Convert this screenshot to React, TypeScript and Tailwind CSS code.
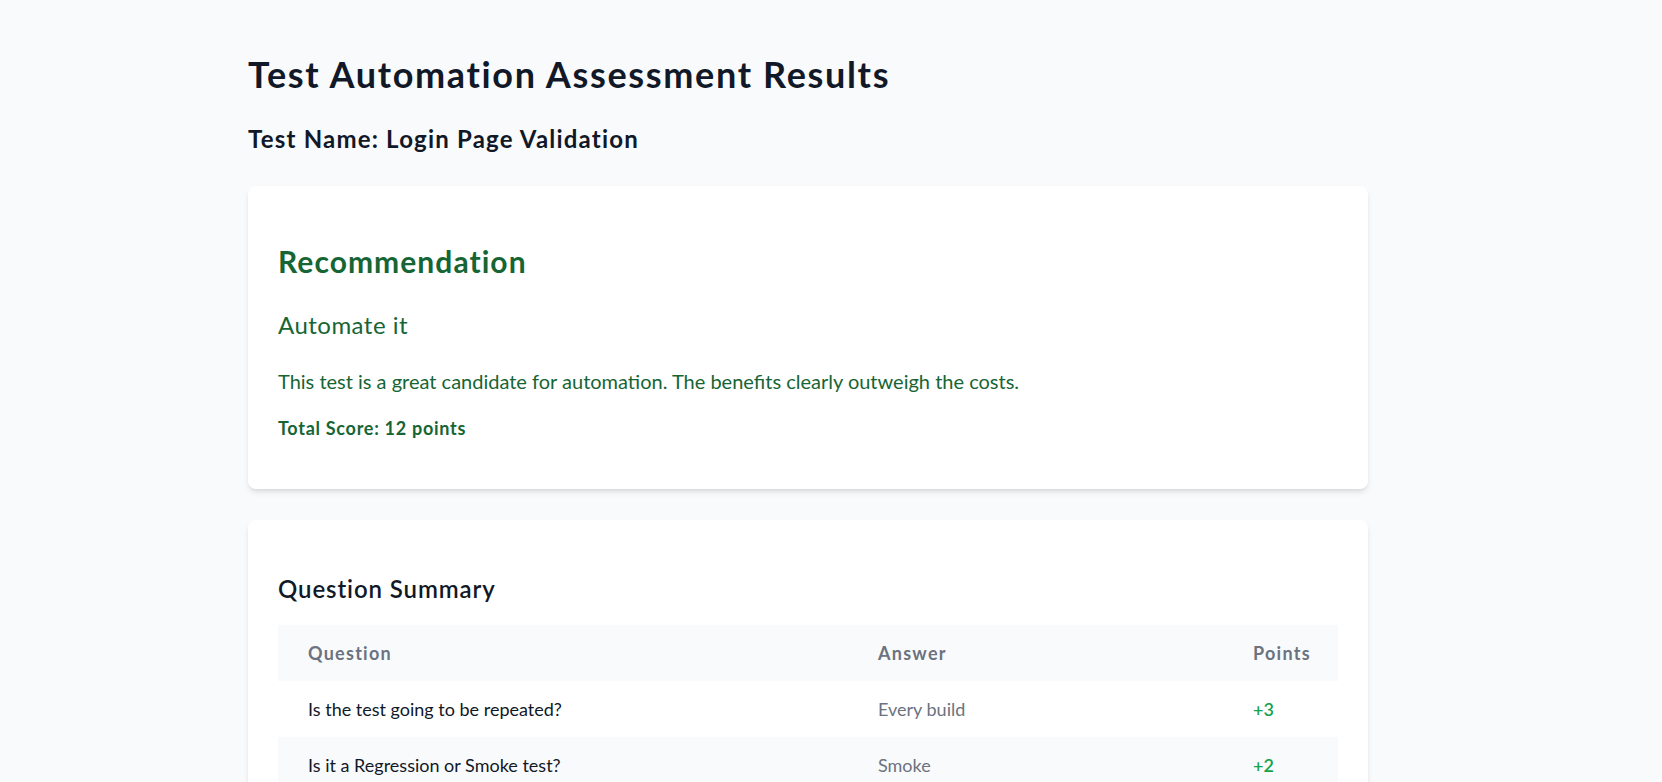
const answers = [
  { question: "Is the test going to be repeated?", answer: "Every build", points: 3 },
  { question: "Is it a Regression or Smoke test?", answer: "Smoke", points: 2 },
  { question: "Is the feature under test stable?", answer: "Yes", points: 3 },
  { question: "Is the test data easy to set up?", answer: "Yes", points: 2 },
  { question: "Does it need manual verification?", answer: "No", points: 2 },
];

export default function App() {
  const total = answers.reduce((sum, a) => sum + a.points, 0);

  return (
    <div className="min-h-screen bg-[#f9fafb] pt-[54px] pb-12 font-['Lato','Segoe_UI',sans-serif] text-[#111827]">
      <div className="ml-[248px] w-[1120px]">
        <h1 className="text-4xl leading-10 font-bold tracking-[0.046em]">Test Automation Assessment Results</h1>
        <h2 className="mt-[29px] text-2xl leading-8 font-bold tracking-wider">Test Name: Login Page Validation</h2>

        {/* recommendation */}
        <section className="mt-[31px] rounded-lg bg-white px-[30px] pt-[57px] pb-[47px] shadow-md">
          <h3 className="text-3xl leading-9 font-bold tracking-[0.035em] text-[#166534]">Recommendation</h3>
          <p className="mt-[30px] text-2xl leading-8 tracking-[0.02em] text-[#166534]">Automate it</p>
          <p className="mt-[26px] text-xl leading-7 text-[#166534]">
            This test is a great candidate for automation. The benefits clearly outweigh the costs.
          </p>
          <p className="mt-[19px] text-lg leading-7 font-bold tracking-[0.04em] text-[#166534]">
            Total Score: {total} points
          </p>
        </section>

        {/* summary table */}
        <section className="mt-[31px] rounded-lg bg-white px-[30px] pt-[53px] pb-8 shadow-md">
          <h3 className="text-2xl leading-8 font-semibold tracking-[0.0375em]">Question Summary</h3>
          <div className="mt-5">
            <div className="grid grid-cols-[570px_375px_1fr] bg-[#f9fafb] py-3.5 text-lg leading-7 font-bold tracking-[0.07em] text-[#6b7280]">
              <div className="pl-[30px]">Question</div>
              <div className="pl-[30px]">Answer</div>
              <div className="pl-[30px]">Points</div>
            </div>
            {answers.map((row, i) => (
              <div
                key={row.question}
                className={`grid grid-cols-[570px_375px_1fr] py-3.5 text-lg leading-7 ${i % 2 === 1 ? "bg-[#f9fafb]" : "bg-white"}`}
              >
                <div className="pl-[30px] text-[#111827]">{row.question}</div>
                <div className="pl-[30px] text-[#6b7280]">{row.answer}</div>
                <div className="pl-[30px] font-semibold text-[#16a34a]">+{row.points}</div>
              </div>
            ))}
          </div>
        </section>
      </div>
    </div>
  );
}
